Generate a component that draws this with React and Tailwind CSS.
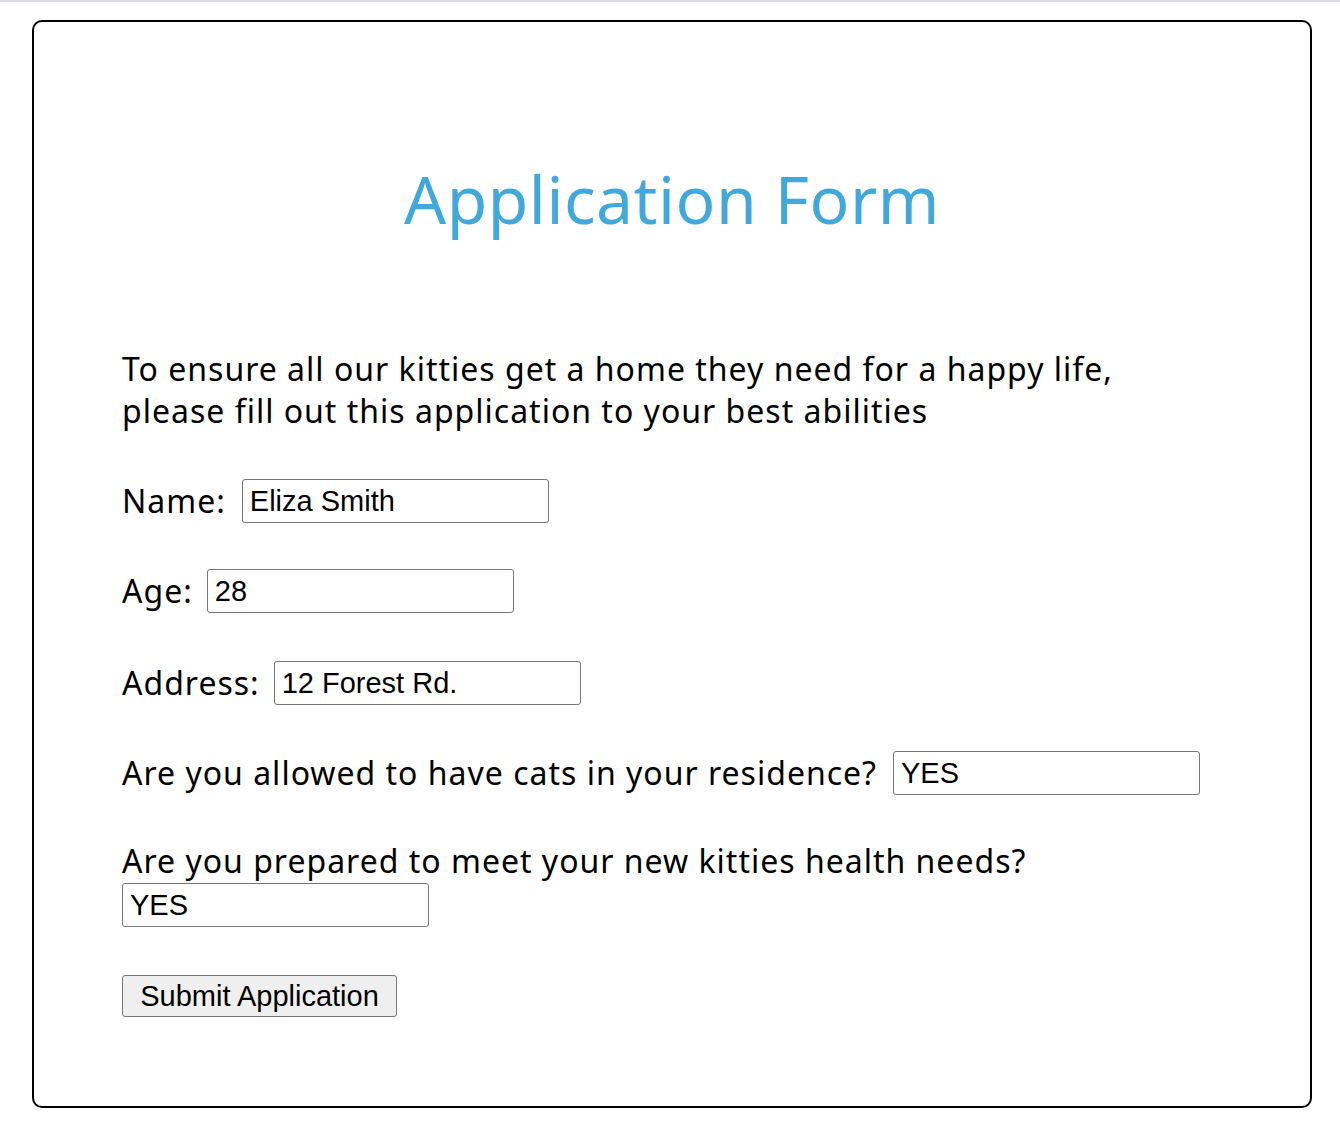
import React from 'react';

const inputCls =
    "h-[44px] w-[307px] border border-[#767676] rounded-[3px] px-[7px] text-[29px] text-black bg-white outline-none tracking-normal [font-family:'Liberation_Sans',Arial,sans-serif]";

const App = () => {
    return (
        <div className="min-h-[1128px] bg-white border-t-2 border-[#dcdce0] [font-family:'Noto_Sans',sans-serif]">
            <div className="ml-[32px] mt-[18px] w-[1280px] h-[1088px] border-2 border-black rounded-[10px] px-[88px]">
                <h1 className="text-center text-[#41a8dc] text-[66px] leading-none pt-[143px] tracking-[0.5px]">
                    Application Form
                </h1>

                <p className="mt-[117px] text-[32px] leading-[42px] tracking-[1px] text-black">
                    To ensure all our kitties get a home they need for a happy life,
                    <br />
                    please fill out this application to your best abilities
                </p>

                {/* Form rows */}
                <form className="mt-[47px] text-[32px] leading-[44px] tracking-[1px] text-black" onSubmit={(e) => e.preventDefault()}>
                    <div className="flex items-center gap-[16px]">
                        <label>Name:</label>
                        <input className={inputCls} defaultValue="Eliza Smith" />
                    </div>
                    <div className="flex items-center gap-[14px] mt-[46px]">
                        <label>Age:</label>
                        <input className={inputCls} defaultValue="28" />
                    </div>
                    <div className="flex items-center gap-[14px] mt-[48px]">
                        <label>Address:</label>
                        <input className={inputCls} defaultValue="12 Forest Rd." />
                    </div>
                    <div className="flex items-center gap-[16px] mt-[46px]">
                        <label>Are you allowed to have cats in your residence?</label>
                        <input className={inputCls} defaultValue="YES" />
                    </div>
                    <div className="mt-[46px]">
                        <label className="block leading-[40px]">Are you prepared to meet your new kitties health needs?</label>
                        <input className={inputCls} defaultValue="YES" />
                    </div>
                    <button
                        type="submit"
                        className="block mt-[48px] h-[42px] w-[275px] bg-[#efefef] border border-[#767676] rounded-[3px] text-[29px] leading-none tracking-normal [font-family:'Liberation_Sans',Arial,sans-serif]"
                    >
                        Submit Application
                    </button>
                </form>
            </div>
        </div>
    );
};

export default App;
